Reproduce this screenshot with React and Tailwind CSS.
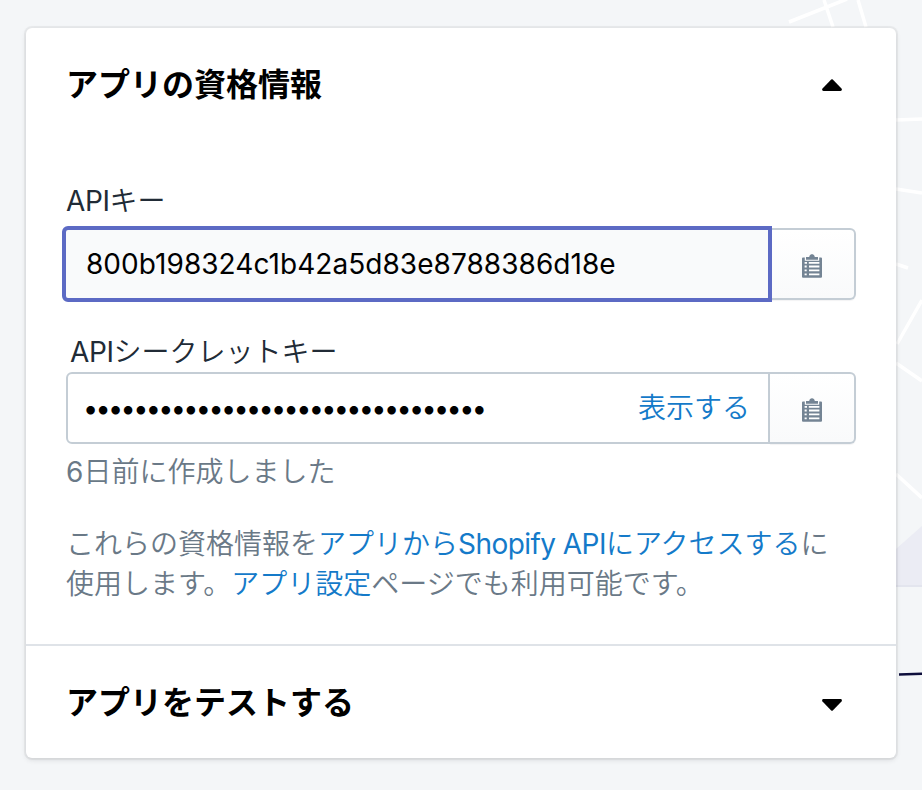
import { useState } from "react";

const API_KEY = "800b198324c1b42a5d83e8788386d18e";

function ClipboardIcon() {
  return (
    <svg width="20" height="24" viewBox="0 0 20 24" fill="none">
      <path
        fill="#748494"
        d="M1 3.400h1.800v3.400h14.400V3.400H19a1 1 0 0 1 1 1v18.300a1 1 0 0 1-1 1H1a1 1 0 0 1-1-1V4.400a1 1 0 0 1 1-1z"
      />
      <path fill="#748494" d="M4 3h3.200C7.500 1 8.500.2 10 .2S12.500 1 12.800 3H16v2.800H4z" />
      <path
        stroke="#fff"
        strokeWidth="1.800"
        d="M2.600 8.800h14.800M2.600 12.500h2.100M7 12.500h10.400M2.600 16.400h2.100M7 16.400h10.400M2.600 20.300h2.100M7 20.300h10.400"
      />
      <path stroke="#748494" strokeWidth="1.800" d="M5.900 7v14" />
    </svg>
  );
}

function Caret({ open }) {
  return (
    <svg width="20" height="12" viewBox="0 0 20 12" className={open ? "" : "mt-1 rotate-180"}>
      <path d="M9.200.6.500 9.600C-.3 10.500.2 12 1.500 12h17c1.300 0 1.800-1.500 1-2.400L10.800.6a1.200 1.200 0 0 0-1.600 0z" />
    </svg>
  );
}

function CopyButton() {
  return (
    <button
      type="button"
      className="flex w-[86px] items-center justify-center rounded-r-md border-2 border-l-0 border-[#c4cdd5] bg-linear-to-b from-white to-[#f9fafb] pt-1 shadow-[0_1px_1px_rgba(22,29,37,0.05)]"
    >
      <ClipboardIcon />
    </button>
  );
}

function SectionHeader({ title, open, onClick }) {
  return (
    <button
      type="button"
      onClick={onClick}
      className="flex h-28 w-full items-center justify-between pt-0.5 pr-[54px] pl-10 text-[32px] font-semibold text-black"
    >
      <span className="whitespace-nowrap">{title}</span>
      <Caret open={open} />
    </button>
  );
}

function Background() {
  return (
    <svg className="absolute inset-0" width="922" height="790" fill="none">
      <path
        stroke="#fff"
        strokeWidth="3.500"
        d="M789 22 847-1M824 0l9 27M858 0l8 27M896 120l26-1M896 189l26 4M896 264l12 4M897 344l25-44M896 363l26 18M896 474l26 24"
      />
      <path fill="#ebecf4" d="M896 549l26-23v59h-26z" />
      <path stroke="#e3e5ee" strokeWidth="2" d="M896 586h26" />
      <path stroke="#0e0e3c" strokeWidth="2.500" d="M899 674.500l23-.7" />
    </svg>
  );
}

function App() {
  const [open, setOpen] = useState(true);

  return (
    <div className="relative h-[790px] w-[922px] overflow-hidden bg-[#f4f6f8] pt-7 pl-[26px] font-['Inter','Noto_Sans_CJK_JP',sans-serif]">
      <Background />
      <div className="relative h-[730px] w-[870px] rounded-md bg-white shadow-[0_0_0_2px_rgba(63,63,68,0.06),0_2px_5px_rgba(63,63,68,0.15)]">
        <SectionHeader title="アプリの資格情報" open={open} onClick={() => setOpen(!open)} />

        <div className="h-[504px] px-10 pt-[41px] text-[28px] leading-10 font-[350] whitespace-nowrap">
          <p className="text-[#212b36]">
            <span className="font-normal tracking-[-0.4px]">API</span>キー
          </p>
          <div className="mt-[7px] flex h-[72px]">
            <div className="relative -my-0.5 -ml-1 flex w-[710px] shrink-0 items-center rounded-l-md border-4 border-[#5c6ac4] bg-[#f9fafb] pl-5 font-normal tracking-[0.05px] text-black">
              {API_KEY}
            </div>
            <div className="-ml-0.5 flex">
              <CopyButton />
            </div>
          </div>

          <p className="mt-8 pl-1 text-[#212b36]">
            <span className="font-normal tracking-[-0.4px]">API</span>シークレットキー
          </p>
          <div className="flex h-[72px]">
            <div className="flex w-[704px] items-center justify-between rounded-l-md border-2 border-[#c4cdd5] pr-[18px] pl-[15px]">
              <span className="pt-0.5 text-[27px] font-normal tracking-[-2.65px] text-black">{"•".repeat(32)}</span>
              <a className="text-[#147ac9]">表示する</a>
            </div>
            <CopyButton />
          </div>
          <p className="mt-2 text-[#6a7987]">
            <span className="font-normal">6</span>日前に作成しました
          </p>

          <p className="mt-8 text-[#6a7987]">
            これらの資格情報を
            <a className="text-[#147ac9]">
              アプリから<span className="font-normal tracking-[-0.55px]">Shopify API</span>にアクセスする
            </a>
            に
            <br />
            使用します。<a className="text-[#147ac9]">アプリ設定</a>ページでも利用可能です。
          </p>
        </div>

        <div className="border-t-2 border-[#dfe3e8]">
          <SectionHeader title="アプリをテストする" open={false} />
        </div>
      </div>
    </div>
  );
}

export default App;
